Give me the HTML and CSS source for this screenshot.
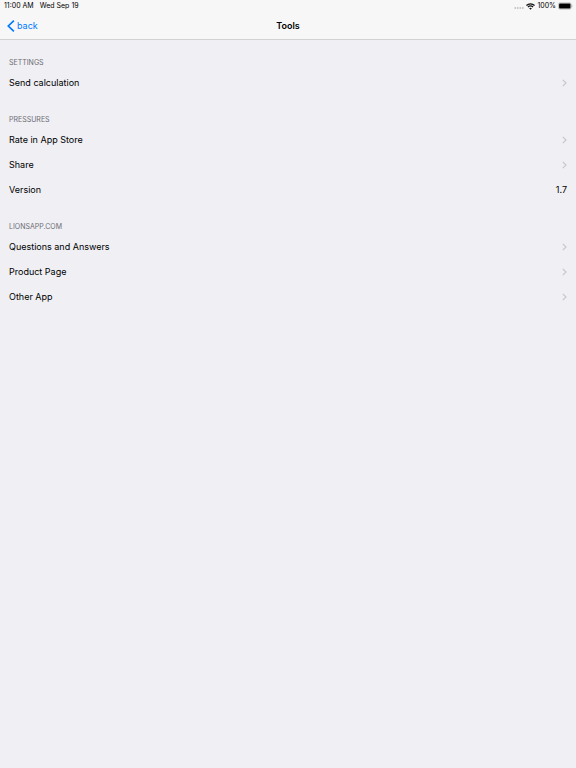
FILE: index.html
```html
<!DOCTYPE html>
<html lang="en">
<head>
    <meta charset="UTF-8">
    <title>Tools</title>
    <meta name="viewport" content="width=device-width, initial-scale=1.0">
    <link rel="stylesheet" href="styles.css">
</head>
<body>
    <svg class="sprite" aria-hidden="true">
        <symbol id="chevron" viewBox="0 0 5 8">
            <path d="M0.8 0.9L4 4L0.8 7.1" fill="none" stroke="#c7c7cc" stroke-width="1.2"/>
        </symbol>
    </svg>

    <header class="top">
        <div class="status-bar">
            <div class="status-left">
                <span>11:00 AM</span>
                <span>Wed Sep 19</span>
            </div>
            <div class="status-right">
                <svg class="signal" width="10" height="8" viewBox="0 0 10 8" fill="#c0c0c2">
                    <circle cx="1.3" cy="6" r="0.9"/>
                    <circle cx="3.8" cy="6" r="0.9"/>
                    <circle cx="6.3" cy="6" r="0.9"/>
                    <circle cx="8.8" cy="6" r="0.9"/>
                </svg>
                <svg class="wifi" width="9" height="7" viewBox="0 0 8 6" fill="none" stroke="#111">
                    <path d="M0.4 2.1C2.4 0.1 5.6 0.1 7.6 2.1" stroke-width="1.1"/>
                    <path d="M1.7 3.5C3 2.3 5 2.3 6.3 3.5" stroke-width="1.1"/>
                    <path d="M2.8 4.6C3.5 4 4.5 4 5.2 4.6L4 5.9Z" fill="#111" stroke="none"/>
                </svg>
                <span>100%</span>
                <svg class="battery" width="15" height="8" viewBox="0 0 15 8">
                    <rect x="0.4" y="0.9" width="12.8" height="6.2" rx="1.6" fill="none" stroke="#999" stroke-width="0.6"/>
                    <rect x="1.1" y="1.6" width="11.4" height="4.8" rx="0.9" fill="#000"/>
                    <path d="M13.8 3C14.6 3.3 14.6 4.7 13.8 5Z" fill="#888"/>
                </svg>
            </div>
        </div>
        <nav class="nav-bar">
            <a class="back" href="#">
                <svg width="8" height="12" viewBox="0 0 8 12">
                    <path d="M6.9 0.7L1.3 6L6.9 11.3" fill="none" stroke="#007aff" stroke-width="1.7"/>
                </svg>
                back
            </a>
            <h1>Tools</h1>
        </nav>
    </header>

    <main>
        <section>
            <h2>SETTINGS</h2>
            <a class="row" href="#">Send calculation <svg class="chevron"><use href="#chevron"/></svg></a>
        </section>

        <section>
            <h2>PRESSURES</h2>
            <a class="row" href="#">Rate in App Store <svg class="chevron"><use href="#chevron"/></svg></a>
            <a class="row" href="#">Share <svg class="chevron"><use href="#chevron"/></svg></a>
            <div class="row">Version <span>1.7</span></div>
        </section>

        <section>
            <h2>LIONSAPP.COM</h2>
            <a class="row" href="#">Questions and Answers <svg class="chevron"><use href="#chevron"/></svg></a>
            <a class="row" href="#">Product Page <svg class="chevron"><use href="#chevron"/></svg></a>
            <a class="row" href="#">Other App <svg class="chevron"><use href="#chevron"/></svg></a>
        </section>
    </main>
</body>
</html>
```

FILE: styles.css
```css
* {
    box-sizing: border-box;
}

body {
    margin: 0;
    min-height: 100vh;
    background: #efeff4;
    color: #000;
    font-family: Inter, "Liberation Sans", sans-serif;
    font-size: 9px;
}

.sprite {
    display: none;
}

.top {
    background: #f7f7f7;
    border-bottom: 1px solid #d2d2d5;
}

.status-bar {
    display: flex;
    justify-content: space-between;
    padding: 0 3px 0 4px;
    font-size: 7px;
    line-height: 12px;
}

.status-left,
.status-right {
    display: flex;
    align-items: center;
}

.status-left {
    gap: 6px;
}

.status-right {
    gap: 2px;
}

.nav-bar {
    display: grid;
    grid-template-columns: 1fr auto 1fr;
    align-items: center;
    height: 27px;
    padding: 0 7px;
}

.nav-bar h1 {
    margin: 0;
    font-size: 9px;
    font-weight: 600;
}

.back {
    display: flex;
    align-items: center;
    gap: 2px;
    color: #007aff;
    text-decoration: none;
}

main {
    display: flex;
    flex-direction: column;
    gap: 18px;
    padding: 16px 9px;
}

h2 {
    margin: 0;
    color: #6d6d72;
    font-size: 7px;
    font-weight: 400;
    line-height: 14px;
}

.row {
    display: flex;
    align-items: center;
    justify-content: space-between;
    color: #000;
    line-height: 25px;
    text-decoration: none;
}

.chevron {
    width: 5px;
    height: 8px;
}
```
